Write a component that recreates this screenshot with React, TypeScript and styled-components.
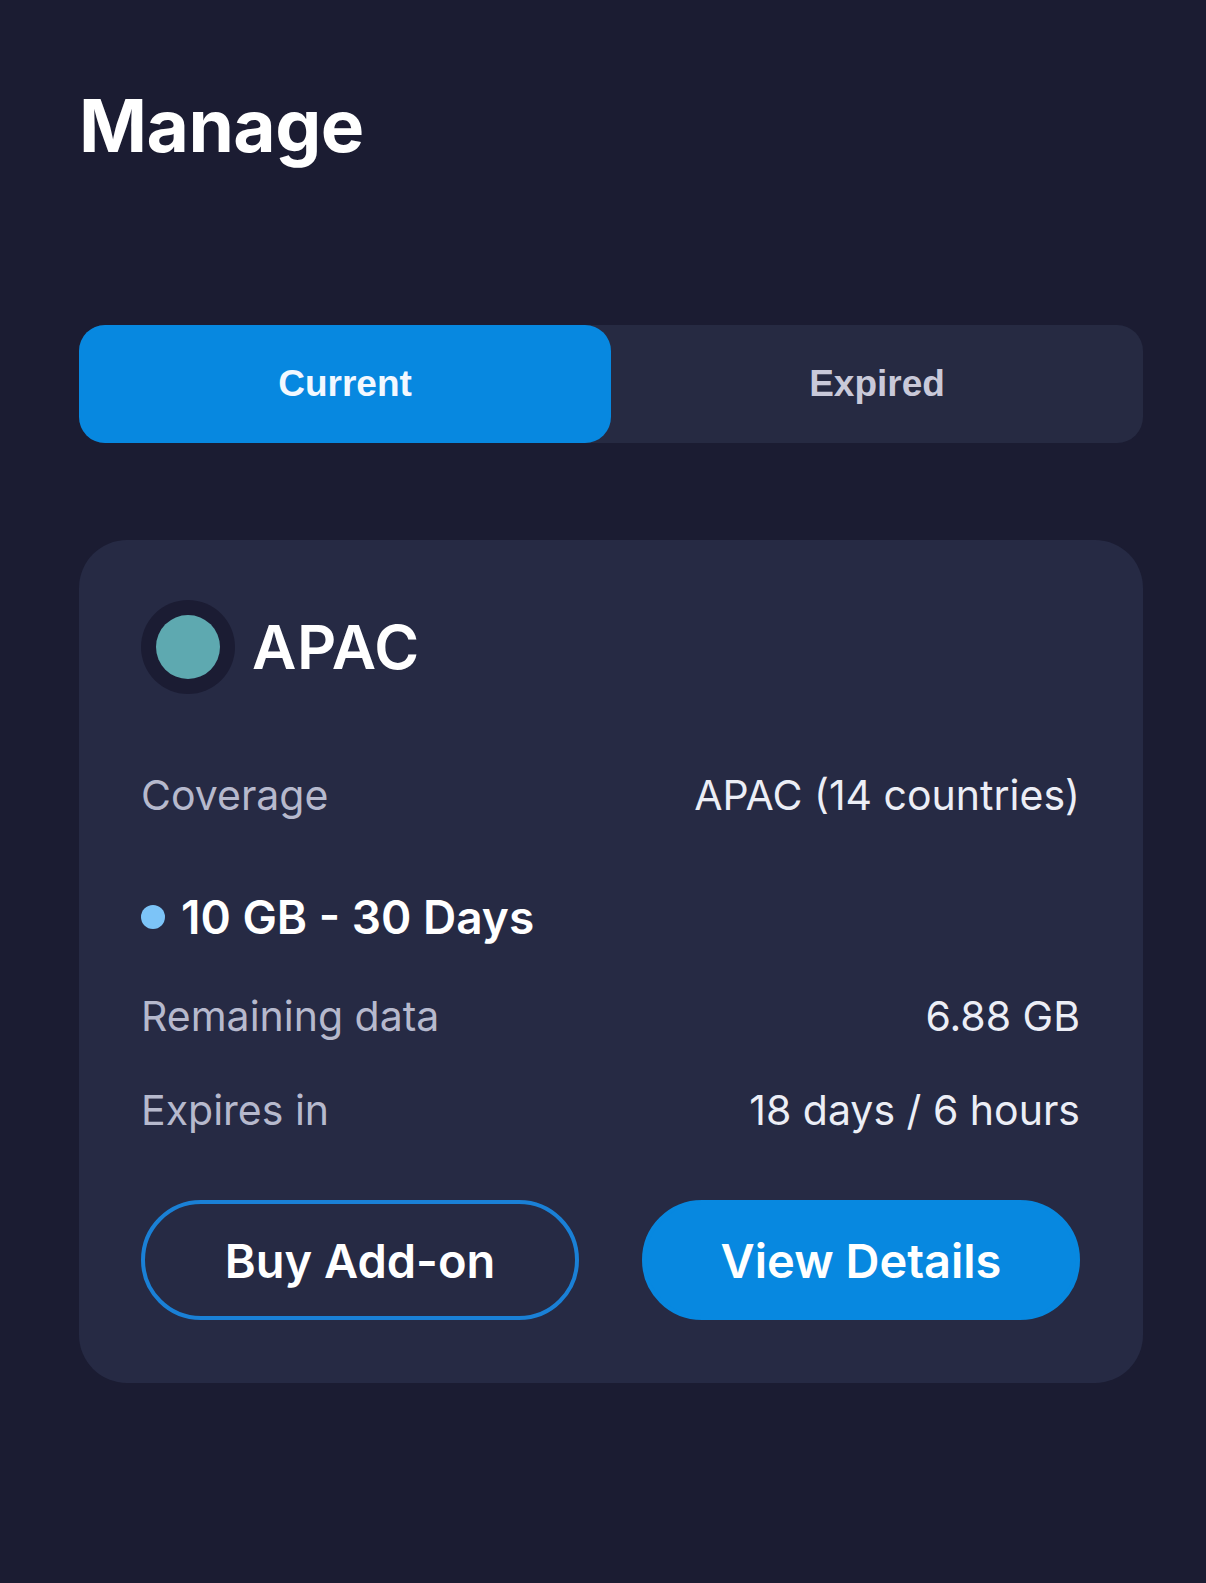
import React, { FC, useState } from 'react';
import styled, { createGlobalStyle, css } from 'styled-components';

const GlobalStyle = createGlobalStyle`
  html, body {
    margin: 0;
    padding: 0;
    background-color: #1b1c32;
  }
  body {
    font-family: Inter, 'Noto Sans', sans-serif;
    -webkit-font-smoothing: antialiased;
  }
`;

const Page = styled.div`
  min-height: 100vh;
  box-sizing: border-box;
  padding: 84px 63px 40px 79px;
  background-color: #1b1c32;
`;

const Title = styled.h1`
  margin: 0;
  font-size: 73px;
  line-height: 84px;
  font-weight: 700;
  color: #ffffff;
  letter-spacing: -0.5px;
`;

const Tabs = styled.div`
  display: grid;
  grid-template-columns: 1fr 1fr;
  height: 118px;
  margin-top: 157px;
  border-radius: 26px;
  background-color: #262a42;
`;

const Tab = styled.button<{ active: boolean }>(
  ({ active }) => css`
    border: none;
    border-radius: 26px;
    font-family: 'Liberation Sans', Arial, sans-serif;
    font-weight: 700;
    font-size: 37px;
    cursor: pointer;
    background-color: ${active ? '#0788e0' : 'transparent'};
    color: ${active ? '#f2f8ff' : '#c9c9d9'};
  `
);

const Card = styled.div`
  margin-top: 97px;
  padding: 60px 63px 63px 62px;
  border-radius: 48px;
  background-color: #262a44;
`;

const Header = styled.div`
  display: flex;
  align-items: center;
  gap: 17px;
  height: 94px;
`;

const Ring = styled.div`
  display: flex;
  align-items: center;
  justify-content: center;
  width: 94px;
  height: 94px;
  border-radius: 50%;
  background-color: #1b1c33;
`;

const Flag = styled.div`
  width: 64px;
  height: 64px;
  border-radius: 50%;
  background-color: #5ea9b0;
`;

const Region = styled.span`
  font-size: 61px;
  font-weight: 600;
  color: #ffffff;
  letter-spacing: 0.5px;
`;

const Row = styled.div<{ gapTop: number }>(
  ({ gapTop }) => css`
    display: flex;
    justify-content: space-between;
    align-items: center;
    height: 56px;
    margin-top: ${gapTop}px;
    font-size: 41px;
  `
);

const Label = styled.span`
  color: #b6b9cd;
  font-weight: 400;
`;

const Value = styled.span`
  color: #eceef6;
  font-weight: 400;
`;

const Plan = styled.div`
  display: flex;
  align-items: center;
  gap: 16px;
  height: 56px;
  margin-top: 66px;
  font-size: 46px;
  font-weight: 600;
  color: #ffffff;
`;

const Dot = styled.span`
  width: 24px;
  height: 24px;
  border-radius: 50%;
  background-color: #7cc4f8;
`;

const Actions = styled.div`
  display: grid;
  grid-template-columns: 1fr 1fr;
  gap: 63px;
  margin-top: 62px;
`;

const ActionButton = styled.button<{ primary?: boolean }>(
  ({ primary }) => css`
    height: 120px;
    border-radius: 60px;
    box-sizing: border-box;
    font-family: Inter, 'Noto Sans', sans-serif;
    font-size: 47px;
    font-weight: 600;
    color: #ffffff;
    cursor: pointer;
    border: 4px solid ${primary ? '#0788e0' : '#1a80d6'};
    background-color: ${primary ? '#0788e0' : '#262a44'};
  `
);

const details = [
  { label: 'Remaining data', value: '6.88 GB', gapTop: 43 },
  { label: 'Expires in', value: '18 days / 6 hours', gapTop: 38 },
];

const App: FC = () => {
  const [tab, setTab] = useState<'current' | 'expired'>('current');

  return (
    <Page>
      <GlobalStyle />
      <Title>Manage</Title>
      <Tabs>
        <Tab active={tab === 'current'} onClick={() => setTab('current')}>
          Current
        </Tab>
        <Tab active={tab === 'expired'} onClick={() => setTab('expired')}>
          Expired
        </Tab>
      </Tabs>
      <Card>
        <Header>
          <Ring>
            <Flag />
          </Ring>
          <Region>APAC</Region>
        </Header>
        <Row gapTop={73}>
          <Label>Coverage</Label>
          <Value>APAC (14 countries)</Value>
        </Row>
        <Plan>
          <Dot />
          10 GB - 30 Days
        </Plan>
        {details.map((item) => (
          <Row key={item.label} gapTop={item.gapTop}>
            <Label>{item.label}</Label>
            <Value>{item.value}</Value>
          </Row>
        ))}
        <Actions>
          <ActionButton>Buy Add-on</ActionButton>
          <ActionButton primary>View Details</ActionButton>
        </Actions>
      </Card>
    </Page>
  );
};

export default App;
